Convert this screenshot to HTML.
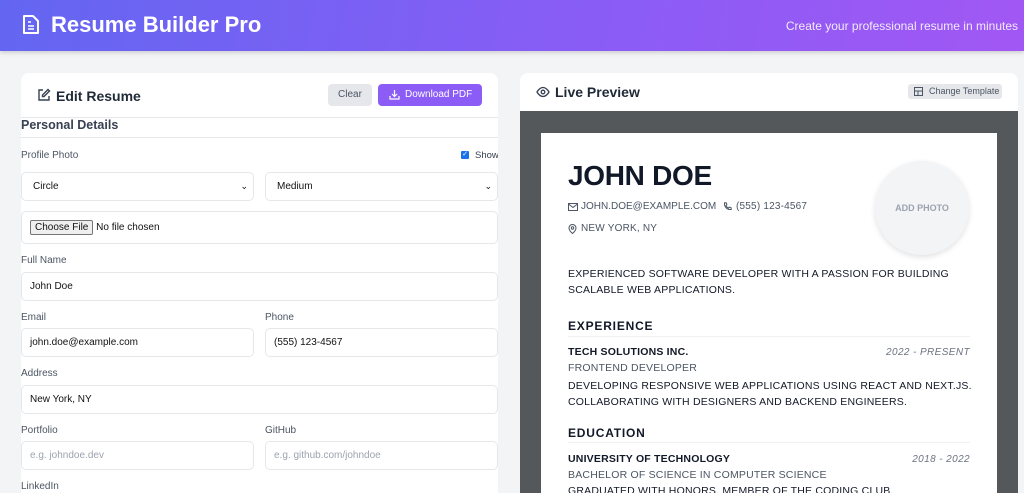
<!DOCTYPE html>
<html><head><meta charset="utf-8"><style>
*{box-sizing:border-box;margin:0;padding:0}
html,body{width:1024px;height:493px;overflow:hidden}
body{background:#f3f4f6;font-family:"Liberation Sans",Arial,sans-serif;position:relative}
.a{position:absolute;white-space:nowrap}
.hdr{left:0;top:0;width:1024px;height:51px;background:linear-gradient(100deg,#6366f1 0%,#8b5cf6 60%,#a157f3 100%);box-shadow:0 2px 4px rgba(0,0,0,.15)}
.card{background:#fff;border-radius:8px 8px 0 0}
.lbl{font-size:10px;color:#4b5563}
.in{position:absolute;background:#fff;border:1px solid #e5e7eb;border-radius:5px;font-size:10px;color:#111;padding-left:8px;display:flex;align-items:center}
.ph{color:#9ca3af}
.r{font-size:10.5px;color:#111827;letter-spacing:.2px}
.g{color:#4b5563}
.sec{font-size:12px;font-weight:bold;letter-spacing:.8px;color:#111827}
.dt{font-size:10px;font-style:italic;color:#6b7280;letter-spacing:.4px}
</style></head><body>
<div class="a hdr"></div>
<svg class="a" style="left:22px;top:14px" width="18" height="21" viewBox="0 0 18 21" fill="none" stroke="#fff" stroke-width="2" stroke-linejoin="round"><path d="M2 2h9l5 5v12H2z"/><path d="M6 8h3M6 12h6M6 15h6" stroke-width="1.6"/></svg>
<div class="a" style="left:51px;top:12px;font-size:22px;font-weight:bold;color:#fff">Resume Builder Pro</div>
<div class="a" style="right:6px;top:19px;font-size:12px;color:#f1eaff">Create your professional resume in minutes</div>

<div class="a card" style="left:21px;top:73px;width:477px;height:420px"></div>
<svg class="a" style="left:37px;top:88px" width="14" height="14" viewBox="0 0 14 14" fill="none" stroke="#374151" stroke-width="1.4"><path d="M6 2H2v10h10V8"/><path d="M11 1.5l1.5 1.5L7 8.5H5.5V7z"/></svg>
<div class="a" style="left:56px;top:88px;font-size:14px;font-weight:bold;color:#1f2937">Edit Resume</div>
<div class="a" style="left:328px;top:84px;width:44px;height:22px;background:#e5e7eb;border-radius:4px;font-size:10px;color:#4b5563;text-align:center;line-height:22px">Clear</div>
<div class="a" style="left:378px;top:84px;width:104px;height:22px;background:#8b5cf6;border-radius:4px;font-size:10px;color:#fff;line-height:22px;padding-left:27px">Download PDF</div>
<svg class="a" style="left:389px;top:89px" width="11" height="11" viewBox="0 0 11 11" fill="none" stroke="#fff" stroke-width="1.2"><path d="M5.5 1v6M3 5l2.5 2.5L8 5M1 7v3h9V7"/></svg>
<div class="a" style="left:21px;top:117px;width:477px;border-top:1px solid #e5e7eb"></div>
<div class="a" style="left:21px;top:118px;font-size:12.5px;font-weight:bold;color:#374151">Personal Details</div>
<div class="a" style="left:21px;top:137px;width:477px;border-top:1px solid #e5e7eb"></div>
<div class="a lbl" style="left:21px;top:150px">Profile Photo</div>
<div class="a" style="left:461px;top:151px;width:8px;height:8px;background:#1a73e8;border-radius:1px;color:#fff;font-size:7px;line-height:8px;text-align:center">✓</div>
<div class="a" style="left:475px;top:150px;color:#374151;font-size:9.5px;width:23px;overflow:hidden">Show</div>
<div class="in" style="left:21px;top:172px;width:233px;height:29px;padding-left:11px">Circle<span style="position:absolute;right:5px;font-size:9px">⌄</span></div>
<div class="in" style="left:265px;top:172px;width:233px;height:29px;padding-left:11px">Medium<span style="position:absolute;right:5px;font-size:9px">⌄</span></div>
<div class="in" style="left:21px;top:211px;width:477px;height:33px"><span style="border:1px solid #767676;background:#efefef;border-radius:2px;padding:1px 4px;font-size:10px">Choose File</span>&nbsp;No file chosen</div>
<div class="a lbl" style="left:21px;top:255px">Full Name</div>
<div class="in" style="left:21px;top:272px;width:477px;height:29px">John Doe</div>
<div class="a lbl" style="left:21px;top:312px">Email</div>
<div class="a lbl" style="left:265px;top:312px">Phone</div>
<div class="in" style="left:21px;top:328px;width:233px;height:29px">john.doe@example.com</div>
<div class="in" style="left:265px;top:328px;width:233px;height:29px">(555) 123-4567</div>
<div class="a lbl" style="left:21px;top:368px">Address</div>
<div class="in" style="left:21px;top:385px;width:477px;height:29px">New York, NY</div>
<div class="a lbl" style="left:21px;top:425px">Portfolio</div>
<div class="a lbl" style="left:265px;top:425px">GitHub</div>
<div class="in ph" style="left:21px;top:441px;width:233px;height:29px">e.g. johndoe.dev</div>
<div class="in ph" style="left:265px;top:441px;width:233px;height:29px">e.g. github.com/johndoe</div>
<div class="a lbl" style="left:21px;top:481px">LinkedIn</div>

<div class="a card" style="left:520px;top:73px;width:498px;height:420px;overflow:hidden">
<div style="position:absolute;left:0;top:38px;width:498px;height:382px;background:#54585b"></div>
</div>
<svg class="a" style="left:536px;top:86px" width="14" height="12" viewBox="0 0 14 12" fill="none" stroke="#374151" stroke-width="1.3"><path d="M1 6s2.5-4.5 6-4.5S13 6 13 6s-2.5 4.5-6 4.5S1 6 1 6z"/><circle cx="7" cy="6" r="1.8"/></svg>
<div class="a" style="left:555px;top:84px;font-size:14px;font-weight:bold;color:#1f2937">Live Preview</div>
<div class="a" style="left:908px;top:84px;width:94px;height:15px;background:#e5e7eb;border-radius:3px;font-size:9px;color:#4b5563;line-height:15px;padding-left:21px">Change Template</div>
<svg class="a" style="left:914px;top:87px" width="9" height="9" viewBox="0 0 9 9" fill="none" stroke="#4b5563" stroke-width="1"><rect x=".5" y=".5" width="8" height="8"/><path d="M.5 4h8M4 4v4.5"/></svg>

<div class="a" style="left:541px;top:133px;width:456px;height:360px;background:#fff;overflow:hidden"></div>
<div class="a" style="left:568px;top:160px;font-size:28px;font-weight:bold;color:#111827;letter-spacing:-.3px">JOHN DOE</div>
<svg class="a" style="left:568px;top:203px" width="10" height="8" viewBox="0 0 10 8" fill="none" stroke="#4b5563" stroke-width="1"><rect x=".5" y=".5" width="9" height="7"/><path d="M.5 1l4.5 3.5L9.5 1"/></svg>
<div class="a g" style="left:581px;top:201px;font-size:10px;letter-spacing:0">JOHN.DOE@EXAMPLE.COM</div>
<svg class="a" style="left:723px;top:202px" width="9" height="9" viewBox="0 0 9 9" fill="none" stroke="#4b5563" stroke-width="1"><path d="M1.5 .8l1.8.1.6 1.8-1 .9a5 5 0 002.5 2.5l.9-1 1.8.6.1 1.8c-4 .5-7.2-2.7-6.7-6.7z"/></svg>
<div class="a g" style="left:736px;top:201px;font-size:10px;letter-spacing:.2px">(555) 123-4567</div>
<svg class="a" style="left:568px;top:224px" width="9" height="10" viewBox="0 0 9 10" fill="none" stroke="#4b5563" stroke-width="1"><path d="M4.5 9.5S1 6.5 1 4a3.5 3.5 0 017 0c0 2.5-3.5 5.5-3.5 5.5z"/><circle cx="4.5" cy="4" r="1.2"/></svg>
<div class="a g" style="left:581px;top:223px;font-size:10px;letter-spacing:.2px">NEW YORK, NY</div>
<div class="a" style="left:875px;top:161px;width:94px;height:94px;border-radius:50%;background:#f3f4f6;box-shadow:0 2px 6px rgba(0,0,0,.12);font-size:9px;font-weight:bold;color:#9ca3af;text-align:center;line-height:94px">ADD PHOTO</div>
<div class="a r" style="left:568px;top:266px;line-height:16px">EXPERIENCED SOFTWARE DEVELOPER WITH A PASSION FOR BUILDING<br>SCALABLE WEB APPLICATIONS.</div>
<div class="a sec" style="left:568px;top:319px">EXPERIENCE</div>
<div class="a" style="left:568px;top:336px;width:402px;border-top:1px solid #f0f1f3"></div>
<div class="a r" style="left:568px;top:346px;font-weight:bold">TECH SOLUTIONS INC.</div>
<div class="a dt" style="right:54px;top:347px">2022 - PRESENT</div>
<div class="a r g" style="left:568px;top:362px">FRONTEND DEVELOPER</div>
<div class="a r" style="left:568px;top:378px;line-height:16px">DEVELOPING RESPONSIVE WEB APPLICATIONS USING REACT AND NEXT.JS.<br>COLLABORATING WITH DESIGNERS AND BACKEND ENGINEERS.</div>
<div class="a sec" style="left:568px;top:426px">EDUCATION</div>
<div class="a" style="left:568px;top:442px;width:402px;border-top:1px solid #f0f1f3"></div>
<div class="a r" style="left:568px;top:453px;font-weight:bold">UNIVERSITY OF TECHNOLOGY</div>
<div class="a dt" style="right:54px;top:454px">2018 - 2022</div>
<div class="a r g" style="left:568px;top:469px">BACHELOR OF SCIENCE IN COMPUTER SCIENCE</div>
<div class="a r" style="left:568px;top:485px;height:8px;overflow:hidden">GRADUATED WITH HONORS. MEMBER OF THE CODING CLUB.</div>
</body></html>
